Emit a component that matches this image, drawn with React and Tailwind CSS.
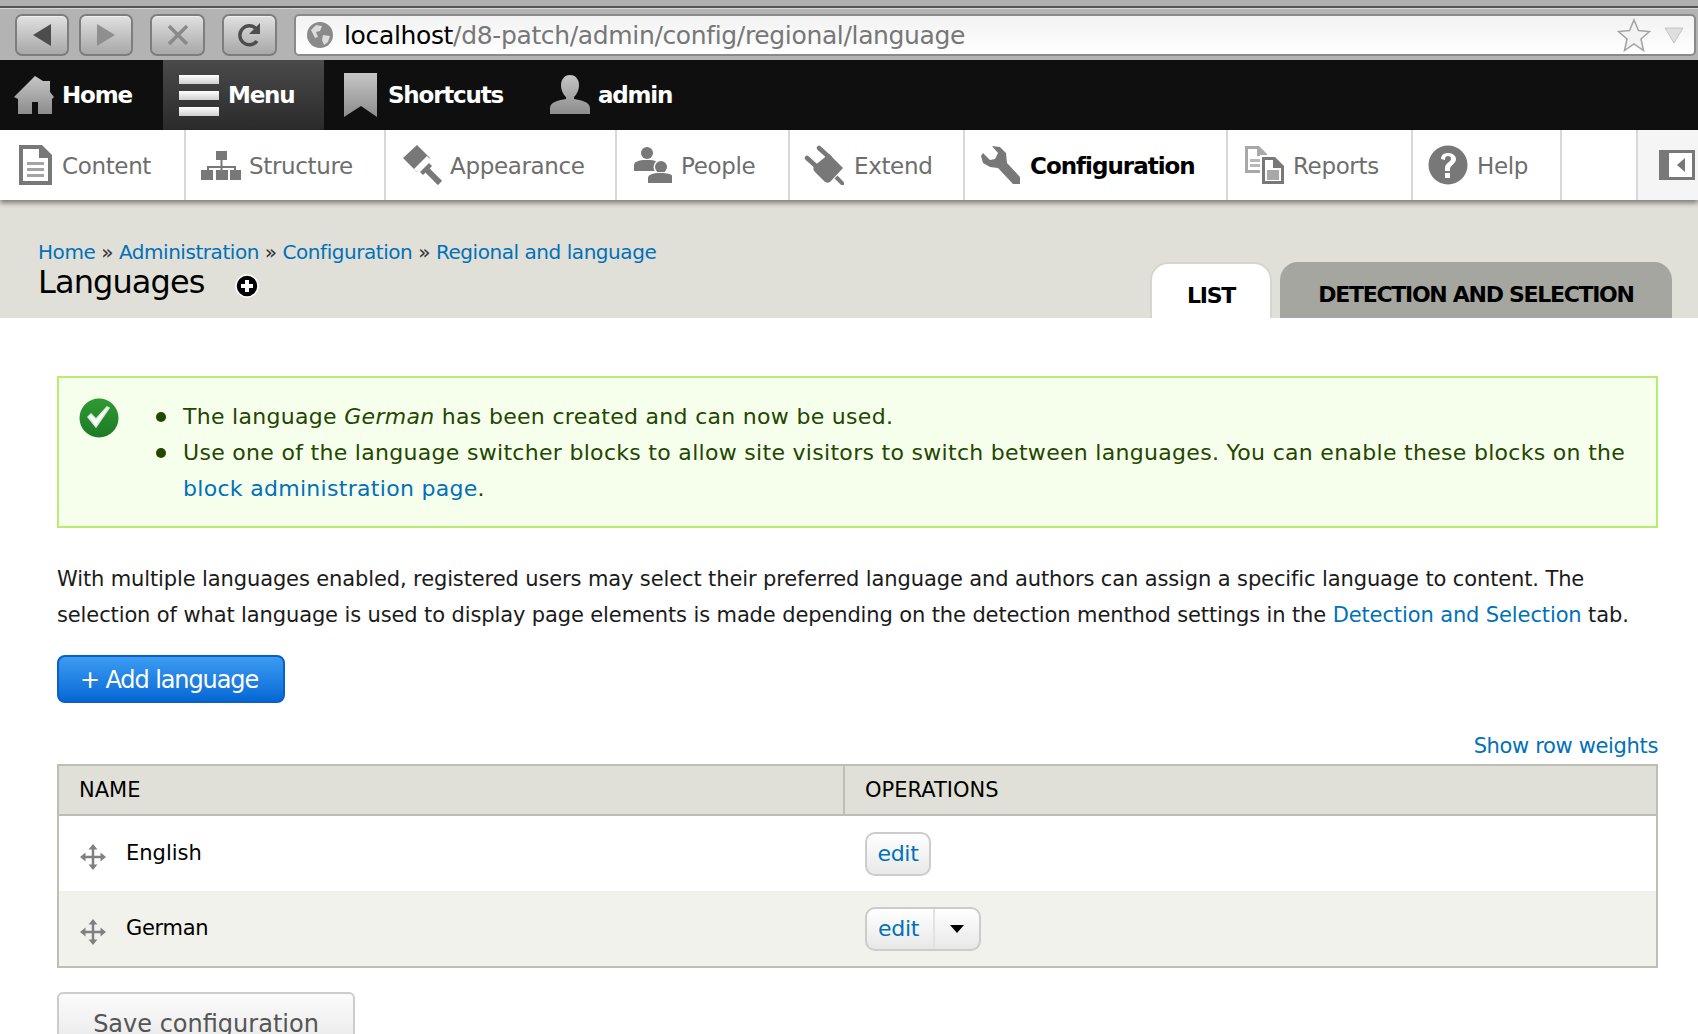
import React from 'react';

const trayItems = [
  { label: 'Content', icon: 'content', cell: 'w-[186px]', gap: 'pl-[15px] gap-[7px]' },
  { label: 'Structure', icon: 'structure', cell: 'w-[200px]', gap: 'pl-[15px] gap-[8px]' },
  { label: 'Appearance', icon: 'appearance', cell: 'w-[231px]', gap: 'pl-[16px] gap-[8px]' },
  { label: 'People', icon: 'people', cell: 'w-[173px]', gap: 'pl-[15px] gap-[9px]' },
  { label: 'Extend', icon: 'extend', cell: 'w-[175px]', gap: 'pl-[14px] gap-[10px]' },
  { label: 'Configuration', icon: 'config', cell: 'w-[263px]', gap: 'pl-[16px] gap-[9px]', active: true },
  { label: 'Reports', icon: 'reports', cell: 'w-[185px]', gap: 'pl-[16px] gap-[9px]' },
  { label: 'Help', icon: 'help', cell: 'w-[149px]', gap: 'pl-[15px] gap-[9px]' },
];

function TrayIcon({ name }) {
  const fill = '#787878';
  return (
    <svg width="40" height="40" viewBox="0 0 40 40" className="shrink-0">
      {name === 'content' && (
        <g>
          <path d="M4 0h23l10 10v30H4z" fill={fill} />
          <path d="M8 4h16v9h9v23H8z" fill="#fff" />
          <path d="M12 17h17v3H12zM12 23h17v3H12zM12 29h17v3H12z" fill="#a4a4a4" />
        </g>
      )}
      {name === 'structure' && (
        <g fill={fill}>
          <rect x="15" y="6" width="11" height="9" />
          <rect x="0" y="25" width="12" height="10" />
          <rect x="15" y="25" width="12" height="10" />
          <rect x="29" y="25" width="11" height="10" />
          <path d="M19.500 15h2v6H35v5h-2v-3H21.500v3h-2v-3H8v3H6v-5h13.500z" />
        </g>
      )}
      {name === 'appearance' && (
        <g>
          <path d="M1 13L15 0l13 13-13 14z" fill={fill} />
          <path d="M12 24L25 11l3 3-13 13z" fill="#fff" />
          <path d="M18 27l9-9 3 3-9 9z" fill={fill} />
          <path d="M24 24l14 14" stroke={fill} strokeWidth="6" />
        </g>
      )}
      {name === 'people' && (
        <g fill={fill}>
          <circle cx="15" cy="8" r="6" />
          <path d="M2 26v-6c0-3 4-5 13-5s12 2 12 5v6z" />
          <circle cx="29" cy="22" r="7.500" fill="#fff" />
          <circle cx="29" cy="22" r="6" />
          <path d="M13 40v-7c0-3 6-6 16-6s13 3 13 6v7z" fill="#fff" />
          <path d="M16 38v-5c0-3 4-5 13-5s12 2 12 5v5z" />
        </g>
      )}
      {name === 'extend' && (
        <g>
          <path d="M3 13l10 9M15 3l11 10" stroke={fill} strokeWidth="4.500" strokeLinecap="round" />
          <path d="M10 21l15-12 14 14-13 14c-2 1-4 1-6-1l-9-9c-2-2-2-4-1-6z" fill={fill} />
          <path d="M32 32l8 8" stroke={fill} strokeWidth="4" />
        </g>
      )}
      {name === 'config' && (
        <path d="M11 1l8 1 6 6 1 10 13 14v7h-7L17 23l-8-1-7-4-2-7 2-3 7 7 5-1 3-6z" fill={fill} />
      )}
      {name === 'reports' && (
        <g>
          <path d="M1 1h14l8 8v19H1z" fill="#a8a8a8" />
          <path d="M4 4h9v7h7v14H4z" fill="#fff" />
          <path d="M6 14h10v3H6zM6 19h10v3H6z" fill="#b8b8b8" />
          <path d="M16 10h16l9 9v21H16z" fill="#fff" />
          <path d="M18 12h13l9 9v18H18z" fill={fill} />
          <path d="M21 15h8v8h8v13H21z" fill="#fff" />
          <path d="M23 25h12v10H23z" fill="#a8a8a8" />
        </g>
      )}
      {name === 'help' && (
        <g>
          <circle cx="20" cy="20" r="19.500" fill={fill} />
          <path d="M13 14c0-4 3-6 7-6 5 0 8 3 8 6 0 5-6 6-6 10v2h-5v-3c0-5 6-6 6-9 0-2-1-3-3-3s-3 1-3 4z" fill="#fff" />
          <rect x="17" y="28" width="5" height="5" fill="#fff" />
        </g>
      )}
    </svg>
  );
}

function ToolbarButton({ className, children }) {
  return (
    <div className={`h-[42px] flex items-center justify-center rounded-[7px] border-2 border-[#7d7d7d] bg-gradient-to-b from-[#e0e0e0] to-[#a8a8a8] shadow-[inset_0_1px_0_#f0f0f0] ${className}`}>
      {children}
    </div>
  );
}

function DragHandle() {
  return (
    <svg width="26" height="26" viewBox="0 0 26 26" className="shrink-0 ml-[1px] mt-[6px]">
      <path d="M13 3v20M3 13h20" stroke="#808080" strokeWidth="2.500" />
      <path d="M13 0l4.500 5.500h-9zM13 26l4.500-5.500h-9zM0 13l5.500-4.500v9zM26 13l-5.500-4.500v9z" fill="#808080" />
    </svg>
  );
}

export default function App() {
  return (
    <div className="relative h-[1034px] w-[1698px] overflow-hidden bg-white font-['DejaVu_Sans',sans-serif] text-black">
      <svg width="0" height="0" className="absolute">
        <defs>
          <linearGradient id="barIcon" x1="0" y1="0" x2="0" y2="1">
            <stop offset="0" stopColor="#c6c6c6" />
            <stop offset="1" stopColor="#8c8c8c" />
          </linearGradient>
          <linearGradient id="okGreen" x1="0" y1="0" x2="0" y2="1">
            <stop offset="0" stopColor="#2f9a34" />
            <stop offset="1" stopColor="#1d7a25" />
          </linearGradient>
        </defs>
      </svg>

      {/* browser chrome */}
      <div className="h-[60px] bg-[#b3b3b3]">
        <div className="h-[6px] bg-[#b0b0b0]" />
        <div className="h-[2px] bg-[#555]" />
        <div className="flex items-start pt-[5px] pl-[15px] pr-[2px] border-t border-[#d6d6d6]">
          <ToolbarButton className="w-[54px]">
            <svg width="22" height="24" viewBox="0 0 22 24"><path d="M20 1v22L2 12z" fill="#4c4c4c" /></svg>
          </ToolbarButton>
          <ToolbarButton className="w-[54px] ml-[10px]">
            <svg width="22" height="24" viewBox="0 0 22 24"><path d="M2 1v22l18-11z" fill="#8f8f8f" /></svg>
          </ToolbarButton>
          <ToolbarButton className="w-[55px] ml-[17px]">
            <svg width="24" height="24" viewBox="0 0 24 24"><path d="M3 3l18 18M21 3L3 21" stroke="#8a8a8a" strokeWidth="3.500" /></svg>
          </ToolbarButton>
          <ToolbarButton className="w-[55px] ml-[17px]">
            <svg width="30" height="30" viewBox="0 0 30 30">
              <path d="M22 21a9.500 9.500 0 1 1-.5-12" fill="none" stroke="#4e4e4e" strokeWidth="3.500" />
              <path d="M25 3v11H14z" fill="#4e4e4e" />
            </svg>
          </ToolbarButton>
          <div className="flex-1 h-[42px] ml-[17px] flex items-center rounded-[5px] border-2 border-[#8a8a8a] bg-gradient-to-b from-[#f2f2f2] to-white pl-[10px] pr-[10px]">
            <svg width="28" height="28" viewBox="0 0 28 28" className="shrink-0">
              <circle cx="14" cy="14" r="13" fill="#8a8a8a" />
              <path d="M5 9l5-5 6 1-2 5-4 1 2 5-3 1zM17 14l7 1-2 6-4 3-2-5z" fill="#dcdcdc" />
            </svg>
            <span className="ml-[10px] mt-[1px] text-[25px] leading-none tracking-[-0.35px] whitespace-nowrap">
              localhost<span className="text-[#777]">/d8-patch/admin/config/regional/language</span>
            </span>
            <div className="flex-1" />
            <svg width="34" height="34" viewBox="0 0 34 34" className="shrink-0">
              <path d="M17 2l4.500 10.500 11 1-8.500 7.500 2.500 11.500L17 26l-9.500 6.500L10 21l-8.500-7.500 11-1z" fill="#f3f3f3" stroke="#a3a3a3" strokeWidth="1.500" />
            </svg>
            <svg width="20" height="20" viewBox="0 0 20 20" className="ml-[13px] shrink-0"><path d="M1 3h18l-9 15z" fill="#dedede" stroke="#c4c4c4" /></svg>
          </div>
        </div>
      </div>

      {/* admin toolbar */}
      <div className="h-[70px] bg-[#0f0f0f] flex text-white font-bold text-[23px] tracking-[-1.2px]">
        <div className="flex items-center pl-[13px] w-[163px]">
          <svg width="42" height="40" viewBox="0 0 42 40" className="shrink-0">
            <path d="M22 1l8 5h7v11l4 5-2 2v15H25V27h-6v12H5V24l-4-2z" fill="url(#barIcon)" />
          </svg>
          <span className="ml-[7px]">Home</span>
        </div>
        <div className="flex items-center pl-[16px] w-[161px] bg-gradient-to-b from-[#4a4a4a] to-[#2b2b2b]">
          <div className="flex flex-col gap-[7px] w-[40px] shrink-0">
            <div className="h-[9px] bg-gradient-to-b from-[#fff] to-[#cfcfcf]" />
            <div className="h-[9px] bg-gradient-to-b from-[#fff] to-[#cfcfcf]" />
            <div className="h-[9px] bg-gradient-to-b from-[#fff] to-[#cfcfcf]" />
          </div>
          <span className="ml-[9px]">Menu</span>
        </div>
        <div className="flex items-center pl-[20px] w-[226px]">
          <svg width="33" height="44" viewBox="0 0 33 44" className="shrink-0">
            <path d="M0 0h33v44L17 33 0 44z" fill="url(#barIcon)" />
          </svg>
          <span className="ml-[11px]">Shortcuts</span>
        </div>
        <div className="flex items-center">
          <svg width="40" height="40" viewBox="0 0 40 40" className="shrink-0">
            <path d="M20 0c6 0 9 5 9 10 0 6-3 10-5 12v2c7 1 16 3 16 9v6H0v-6c0-6 9-8 16-9v-2c-2-2-5-6-5-12 0-5 3-10 9-10z" fill="url(#barIcon)" />
          </svg>
          <span className="ml-[8px]">admin</span>
        </div>
      </div>

      {/* tray */}
      <div className="relative h-[70px] bg-white flex shadow-[0_3px_5px_rgba(0,0,0,0.45)]">
        {trayItems.map((item) => (
          <div key={item.label} className={`${item.cell} ${item.gap} flex items-center border-r-2 border-[#d8d8d8]`}>
            <TrayIcon name={item.icon} />
            <span className={item.active ? 'mt-[2px] text-[23px] font-bold text-black tracking-[-1px]' : 'mt-[2px] text-[23px] text-[#6e6e6e] tracking-[-0.35px]'}>
              {item.label}
            </span>
          </div>
        ))}
        <div className="w-[74px]" />
        <div className="flex-1 bg-[#f5f5f5] border-l-2 border-[#d8d8d8] flex items-center pl-[21px]">
          <div className="w-[36px] h-[30px] border-[3px] border-l-[10px] border-[#787878] bg-white flex items-center justify-center">
            <svg width="8" height="14" viewBox="0 0 8 14"><path d="M8 0v14L0 7z" fill="#777" /></svg>
          </div>
        </div>
      </div>

      {/* page header */}
      <div className="h-[118px] bg-[#e0e0d8] flex justify-between pl-[38px] pr-[26px]">
        <div className="pt-[37px]">
          <div className="text-[20px] leading-[30px] text-[#333] tracking-[-0.45px]">
            <a className="text-[#0071b8]">Home</a> » <a className="text-[#0071b8]">Administration</a> » <a className="text-[#0071b8]">Configuration</a> » <a className="text-[#0071b8]">Regional and language</a>
          </div>
          <div className="flex items-center -mt-[4px]">
            <h1 className="text-[32px] leading-[38px] tracking-[-0.9px]">Languages</h1>
            <svg width="24" height="24" viewBox="0 0 24 24" className="ml-[30px] mt-[8px]">
              <circle cx="12" cy="12" r="11" fill="#000" stroke="#fff" strokeWidth="1.500" />
              <path d="M12 6v12M6 12h12" stroke="#fff" strokeWidth="4" />
            </svg>
          </div>
        </div>
        <div className="flex items-end font-bold text-[22px] tracking-[-1.3px]">
          <div className="w-[122px] h-[56px] pt-[8px] rounded-t-[18px] border-2 border-b-0 border-[#d6d6ce] bg-white flex items-center justify-center">LIST</div>
          <div className="w-[392px] h-[56px] pt-[8px] ml-[8px] rounded-t-[18px] bg-[#a6a6a0] flex items-center justify-center">DETECTION AND SELECTION</div>
        </div>
      </div>

      {/* content */}
      <div className="pt-[58px] pl-[57px] pr-[40px]">
        <div className="h-[152px] border-2 border-[#b8ec74] bg-[#f6ffec] flex pt-[22px] pl-[20px] text-[#234600] text-[22px] leading-[36px] tracking-[0.3px]">
          <svg width="40" height="40" viewBox="0 0 40 40" className="shrink-0 -mt-[2px]">
            <circle cx="20" cy="20" r="19.500" fill="url(#okGreen)" />
            <path d="M9 19l8 10 13-19-2-1-11 12-5-5z" fill="#fff" stroke="#d8ecd8" strokeWidth="1.500" />
          </svg>
          <ul className="ml-[37px] -mt-[1px]">
            <li className="flex">
              <span className="shrink-0 w-[10px] h-[10px] mt-[13px] mr-[17px] rounded-full bg-[#234600]" />
              <span>The language <em>German</em> has been created and can now be used.</span>
            </li>
            <li className="flex">
              <span className="shrink-0 w-[10px] h-[10px] mt-[13px] mr-[17px] rounded-full bg-[#234600]" />
              <span className="w-[1460px]">Use one of the language switcher blocks to allow site visitors to switch between languages. You can enable these blocks on the <a className="text-[#0071b8]">block administration page</a>.</span>
            </li>
          </ul>
        </div>

        <p className="mt-[33px] text-[21px] leading-[36px] text-[#1a1a1a] tracking-[-0.12px] w-[1610px]">
          With multiple languages enabled, registered users may select their preferred language and authors can assign a specific language to content. The selection of what language is used to display page elements is made depending on the detection menthod settings in the <a className="text-[#0071b8]">Detection and Selection</a> tab.
        </p>

        <button className="block mt-[22px] pt-[2px] pr-[4px] w-[228px] h-[48px] rounded-[8px] border-2 border-[#0a5fc9] bg-gradient-to-b from-[#3b9cf2] to-[#0368d4] text-white text-[24px] tracking-[-1.1px]">
          + Add language
        </button>

        <div className="mt-[27px] text-right text-[21px] leading-[32px] text-[#0071b8] tracking-[-0.35px]">Show row weights</div>

        <table className="mt-[2px] w-full table-fixed border-collapse border-2 border-[#bebeb6]">
          <thead>
            <tr className="h-[50px] bg-[#e0e0d8] border-b-2 border-[#bebeb6] text-left text-[21px]">
              <th className="w-[786px] pl-[20px] pt-[2px] font-normal border-r-2 border-[#bebeb6]">NAME</th>
              <th className="pl-[20px] pt-[2px] font-normal">OPERATIONS</th>
            </tr>
          </thead>
          <tbody className="text-[21px]">
            <tr className="h-[76px]">
              <td className="pl-[20px]">
                <div className="flex items-center">
                  <DragHandle />
                  <span className="ml-[20px] mt-[1px]">English</span>
                </div>
              </td>
              <td className="pl-[21px]">
                <div className="w-[66px] h-[44px] rounded-[10px] border-2 border-[#ccc] bg-gradient-to-b from-white to-[#e8e8e8] flex items-center justify-center text-[#0071b8] text-[22px] tracking-[-0.3px]">edit</div>
              </td>
            </tr>
            <tr className="h-[76px] bg-[#f2f2ed]">
              <td className="pl-[20px]">
                <div className="flex items-center">
                  <DragHandle />
                  <span className="ml-[20px] mt-[1px] tracking-[-0.3px]">German</span>
                </div>
              </td>
              <td className="pl-[21px]">
                <div className="w-[116px] h-[44px] rounded-[10px] border-2 border-[#ccc] bg-gradient-to-b from-white to-[#e8e8e8] flex items-center">
                  <div className="w-[68px] h-full pl-[11px] border-r-2 border-[#e2e2e2] flex items-center text-[#0071b8] text-[22px] tracking-[-0.3px]">edit</div>
                  <div className="flex-1 flex items-center justify-center pr-[1px]">
                    <svg width="14" height="8" viewBox="0 0 14 8"><path d="M0 0h14L7 8z" fill="#000" /></svg>
                  </div>
                </div>
              </td>
            </tr>
          </tbody>
        </table>

        <button className="block mt-[24px] pt-[3px] w-[298px] h-[60px] rounded-t-[6px] border-2 border-[#ccc] bg-gradient-to-b from-[#fbfbfb] to-[#e8e8e8] text-[#555] text-[24px]">
          Save configuration
        </button>
      </div>
    </div>
  );
}
